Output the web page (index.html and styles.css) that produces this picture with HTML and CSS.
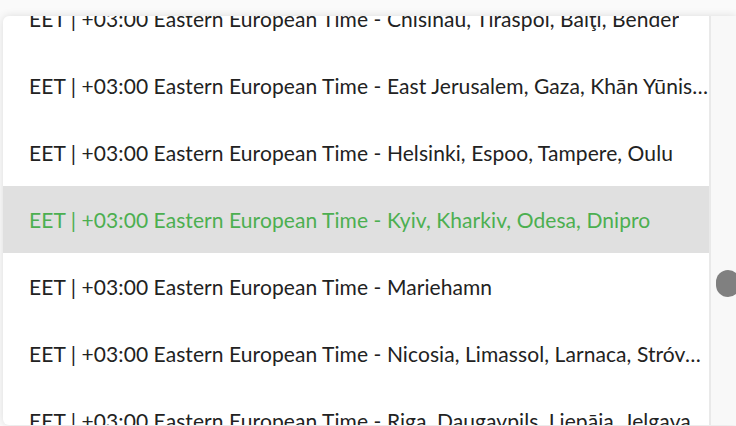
FILE: index.html
```html
<!DOCTYPE html>
<html lang="en">
<head>
    <meta charset="UTF-8">
    <meta name="viewport" content="width=device-width, initial-scale=1.0">
    <title>Time zone</title>
    <link rel="stylesheet" href="styles.css">
</head>
<body>
    <div class="frame">
        <div class="dropdown">
            <ul class="options">
                <li class="option"><span>EET | +03:00 Eastern European Time - Chisinau, Tiraspol, Bălţi, Bender</span></li>
                <li class="option"><span>EET | +03:00 Eastern European Time - East Jerusalem, Gaza, Khān Yūnis, Jabālyā</span></li>
                <li class="option"><span>EET | +03:00 Eastern European Time - Helsinki, Espoo, Tampere, Oulu</span></li>
                <li class="option selected"><span>EET | +03:00 Eastern European Time - Kyiv, Kharkiv, Odesa, Dnipro</span></li>
                <li class="option"><span>EET | +03:00 Eastern European Time - Mariehamn</span></li>
                <li class="option"><span>EET | +03:00 Eastern European Time - Nicosia, Limassol, Larnaca, Stróvolos</span></li>
                <li class="option"><span>EET | +03:00 Eastern European Time - Riga, Daugavpils, Liepāja, Jelgava</span></li>
            </ul>
        </div>
        <div class="track">
            <div class="thumb"></div>
        </div>
    </div>
</body>
</html>
```

FILE: styles.css
```css
body {
    font-family: Lato, "Open Sans", sans-serif;
    background-color: #fafafa;
    color: #222;
    margin: 0;
    padding: 0;
    height: 426px;
    overflow: hidden;
}
.frame {
    display: flex;
    margin: 16px 0 0 3px;
    height: 409px;
    background-color: #fff;
    border-radius: 6px 0 0 6px;
    box-shadow: 0 0 8px rgba(0, 0, 0, 0.12);
    overflow: hidden;
}
.dropdown {
    flex: 1;
    min-width: 0;
    overflow: hidden;
}
.options {
    list-style: none;
    margin: -31px 0 0 0;
    padding: 0;
}
.option {
    height: 67px;
    display: flex;
    align-items: center;
    padding: 0 0 0 26px;
    font-size: 21px;
    letter-spacing: 0.08px;
}
.option span {
    white-space: nowrap;
    overflow: hidden;
    text-overflow: ellipsis;
}
.option.selected {
    background-color: #e0e0e0;
    color: #4caf50;
}
.track {
    width: 25px;
    flex-shrink: 0;
    background-color: #f8f8f8;
    border-left: 2px solid #e9e9e9;
}
.thumb {
    margin: 254px 0 0 5px;
    width: 24px;
    height: 27px;
    border-radius: 12px;
    background-color: #808080;
}
```
